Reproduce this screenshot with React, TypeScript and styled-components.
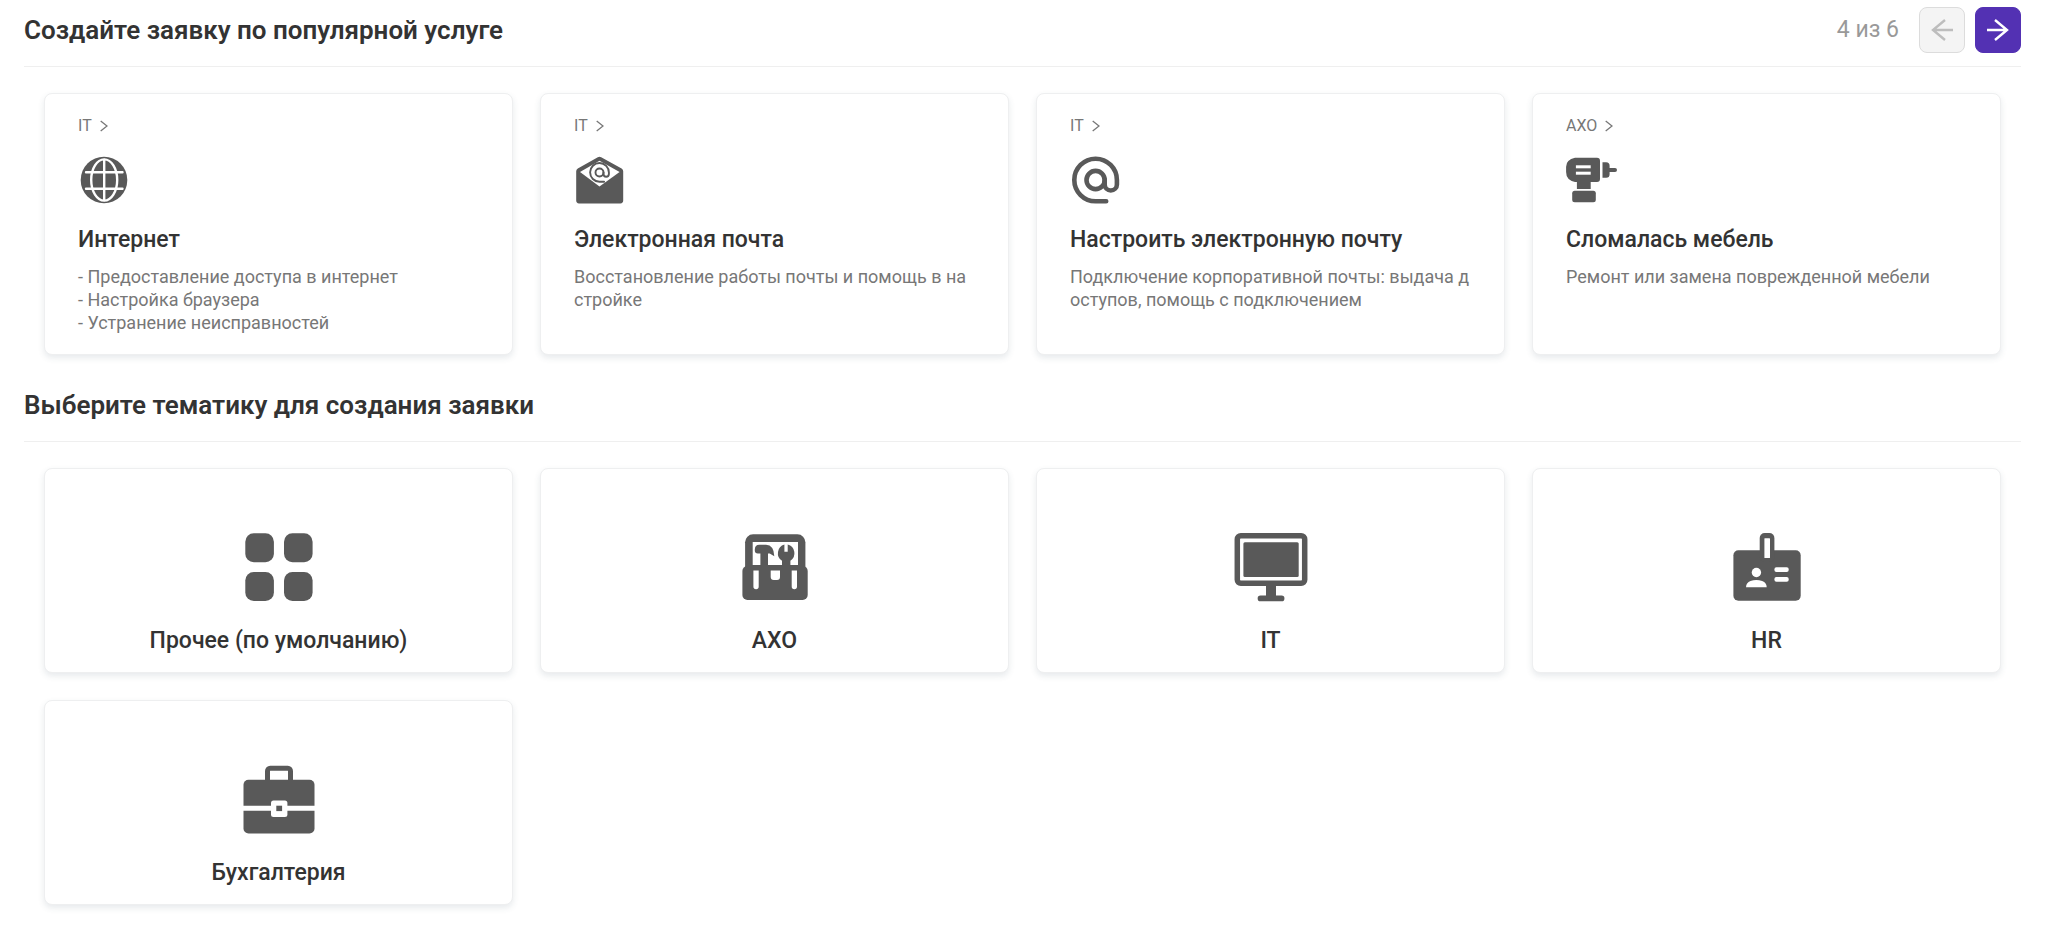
import React from "react";
import styled, { createGlobalStyle } from "styled-components";

const GlobalStyle = createGlobalStyle`
  *, *::before, *::after { box-sizing: border-box; }
  body {
    margin: 0;
    background: #fff;
    color: #333;
    font-family: Roboto, "Noto Sans", sans-serif;
  }
`;

const Page = styled.main`
  padding: 7px 27px 20px 24px;
`;

const Section = styled.section`
  & + & { margin-top: 27px; }
`;

const SectionHeader = styled.header`
  display: flex;
  align-items: center;
  justify-content: space-between;
  height: 60px;
  padding-bottom: 13px;
  border-bottom: 1px solid #efefef;
`;

const SectionTitle = styled.h2`
  margin: 0;
  font-size: 26px;
  line-height: 32px;
  font-weight: 600;
`;

const Pager = styled.nav`
  display: flex;
  align-items: center;
  gap: 10px;
`;

const PageCount = styled.span`
  margin-right: 10px;
  font-size: 23px;
  line-height: 32px;
  color: #999;
`;

const PagerButton = styled.button<{ $primary?: boolean }>`
  display: flex;
  align-items: center;
  justify-content: center;
  width: 46px;
  height: 46px;
  padding: 0;
  border-radius: 8px;
  border: 1px solid ${(p) => (p.$primary ? "#5331b3" : "#dcdcdc")};
  background: ${(p) => (p.$primary ? "#5331b3" : "#f4f4f4")};
  color: ${(p) => (p.$primary ? "#fff" : "#bdbdbd")};
`;

const CardGrid = styled.div`
  display: grid;
  grid-template-columns: repeat(4, minmax(0, 1fr));
  gap: 27px;
  padding: 26px 20px 0;
`;

const Card = styled.a`
  display: flex;
  flex-direction: column;
  border: 1px solid #eeeff0;
  border-radius: 8px;
  background: #fff;
  box-shadow: 0 3px 6px rgba(60, 80, 100, 0.12);
  color: #333;
  text-decoration: none;
`;

const ServiceCard = styled(Card)`
  min-height: 262px;
  padding: 20px 33px 18px;
`;

const TopicCard = styled(Card)`
  align-items: center;
  gap: 23px;
  min-height: 205px;
  padding: 62px 33px 16px;
`;

const Crumb = styled.span`
  display: flex;
  align-items: center;
  gap: 8px;
  font-size: 16px;
  line-height: 24px;
  color: #777;
`;

const CardTitle = styled.h3`
  margin: 0;
  font-size: 23px;
  line-height: 30px;
  font-weight: 500;
`;

const ServiceTitle = styled(CardTitle)`
  margin-top: 19px;
`;

const Description = styled.p`
  margin: 10px 0 0;
  font-size: 18px;
  line-height: 23px;
  color: #777;
  word-break: break-all;
  white-space: pre-line;
`;

const ServiceIcon = styled.svg`
  display: block;
  width: 52px;
  height: 52px;
  margin-top: 16px;
  overflow: visible;
  color: #595959;
`;

const TopicIcon = styled.svg`
  display: block;
  width: 72px;
  height: 72px;
  overflow: visible;
  color: #595959;
`;

const Chevron = () => (
  <svg width="8" height="12" viewBox="0 0 8 12" fill="none" stroke="currentColor" strokeWidth="1.3" aria-hidden="true">
    <path d="M.7 1 7 6 .7 11" />
  </svg>
);

const Arrow = ({ back }: { back?: boolean }) => (
  <svg width="24" height="24" viewBox="0 0 24 24" fill="none" stroke="currentColor" strokeWidth="2.4" aria-hidden="true">
    <path d={back ? "M23 12H3M15 2 3 12l12 10" : "M1 12h20M9 2l12 10L9 22"} />
  </svg>
);

const Globe = () => (
  <ServiceIcon viewBox="0 0 52 52" aria-hidden="true">
    <circle cx="26" cy="26" r="23.3" fill="currentColor" />
    <g fill="none" stroke="#fff" strokeWidth="2.4" strokeLinecap="round">
      <path d="M8 18.3h36.5M8 34.7h36.5M26.2 6v40" />
      <ellipse cx="26.2" cy="26" rx="13" ry="20.6" />
    </g>
  </ServiceIcon>
);

const Envelope = () => (
  <ServiceIcon viewBox="0 0 52 52" aria-hidden="true">
    <path
      fill="currentColor"
      d="M23.8 3.2a3.5 3.5 0 0 1 3.4 0L47.6 14.4q1.6 1 1.6 2.8V46.6a2.8 2.8 0 0 1-2.8 2.8H5a2.8 2.8 0 0 1-2.8-2.8V17.2q0-1.8 1.6-2.8z"
    />
    <path fill="#fff" d="M25.5 6.8 45.6 18 25.5 32.6 6 18z" />
    <g fill="none" stroke="currentColor" strokeWidth="1.9" strokeLinecap="round">
      <circle cx="25.5" cy="18.5" r="4" />
      <path d="M29.5 18.5v1.6a2.7 2.7 0 0 0 5.4 0v-1.6a9.4 9.4 0 1 0-9.4 9.3h4.6" />
    </g>
  </ServiceIcon>
);

const AtSign = () => (
  <ServiceIcon viewBox="0 0 52 52" aria-hidden="true">
    <g fill="none" stroke="currentColor" strokeWidth="4.6" strokeLinecap="round">
      <circle cx="25.6" cy="26" r="9.1" />
      <path d="M34.7 26v4.4a6 6 0 0 0 12.2 0V26A21.3 21.3 0 1 0 25.6 47.3h10.6" />
    </g>
  </ServiceIcon>
);

const Drill = () => (
  <ServiceIcon viewBox="0 0 52 52" fill="currentColor" aria-hidden="true">
    <path d="M9 3.7h22a3 3 0 0 1 3 3V25a3 3 0 0 1-3 3h-6.3v7H10.9v-7H9Q.1 26 .1 18v-5.3Q.1 5.500 9 3.700z" />
    <rect x="6.200" y="36.700" width="23.600" height="11.500" rx="2.500" />
    <path d="M36.500 8.300h3.600a3.500 3.500 0 0 1 3.500 3.500V14H49a2 2 0 0 1 0 4h-5.400v2.200a3.500 3.500 0 0 1-3.500 3.500h-3.600z" />
    <g fill="#fff">
      <rect x="9.900" y="11.300" width="14.800" height="3" />
      <rect x="9.900" y="17.700" width="14.800" height="3" />
    </g>
  </ServiceIcon>
);

const Squares = () => (
  <TopicIcon viewBox="0 0 72 72" fill="currentColor" aria-hidden="true">
    <rect x="2.300" y="2.300" width="28.600" height="29" rx="8.500" />
    <rect x="41" y="2.300" width="28.600" height="29" rx="8.500" />
    <rect x="2.300" y="41" width="28.600" height="29" rx="8.500" />
    <rect x="41" y="41" width="28.600" height="29" rx="8.500" />
  </TopicIcon>
);

const Toolbox = () => (
  <TopicIcon viewBox="0 0 72 72" fill="currentColor" aria-hidden="true">
    <rect x="6.100" y="3.300" width="60.300" height="50" rx="8" />
    <rect x="3.400" y="35" width="65.300" height="34" rx="5" />
    <g fill="#fff">
      <rect x="13.700" y="11" width="45.300" height="23" />
      <path d="M14.400 39.500h5.300v16a2.600 2.600 0 0 1-5.300 0zM52.700 39.500H58v16a2.600 2.600 0 0 1-5.300 0zM31.700 39.500H41V46a3 3 0 0 1-3 3h-3.300a3 3 0 0 1-3-3z" />
    </g>
    <path d="M21.400 36V22.600h-2.600a3 3 0 0 1-3-3v-1q0-4.900 4.500-4.900H27q8 .4 8.300 11.600l-4.600-2.700H29V36z" />
    <path d="M45.400 13.600v7.100h3.300v-7.100a9 9 0 0 1 2.700 16.200V36H43v-6.200a9 9 0 0 1 2.400-16.200z" />
  </TopicIcon>
);

const Monitor = () => (
  <TopicIcon viewBox="0 0 72 72" fill="currentColor" aria-hidden="true">
    <rect x="2.300" y="4.700" width="67.400" height="47.600" rx="3.500" fill="none" stroke="currentColor" strokeWidth="5.500" />
    <rect x="8.400" y="11.300" width="55.300" height="34.700" rx="1.500" />
    <path d="M31 54h10v10.600h5.600a2.800 2.800 0 0 1 0 5.700H25.500a2.800 2.800 0 0 1 0-5.700H31z" />
  </TopicIcon>
);

const Badge = () => (
  <TopicIcon viewBox="0 0 72 72" fill="currentColor" aria-hidden="true">
    <rect x="2.400" y="19.300" width="67.300" height="50.400" rx="5" />
    <rect x="28.700" y="2" width="14.700" height="29" rx="5" />
    <g fill="#fff">
      <rect x="33.400" y="7.300" width="5.600" height="19.700" rx=".5" />
      <circle cx="25.400" cy="41.500" r="4.700" />
      <path d="M15 56.300q0-4.600 4.500-6.300 5.800-2 11.700 0 4.500 1.700 4.500 6.300z" />
      <rect x="43.400" y="36.300" width="14.300" height="4.700" rx="2" />
      <rect x="43.400" y="46" width="14.300" height="4.700" rx="2" />
    </g>
  </TopicIcon>
);

const Briefcase = () => (
  <TopicIcon viewBox="0 0 72 72" fill="currentColor" aria-hidden="true">
    <rect x=".5" y="16.800" width="71" height="53.700" rx="5" />
    <path d="M24.500 19V8a2.700 2.700 0 0 1 2.700-2.700h17.600A2.700 2.700 0 0 1 47.500 8v11" fill="none" stroke="currentColor" strokeWidth="5" />
    <path fill="#fff" d="M0 42.800h72v5H0z" />
    <rect x="28" y="37.500" width="16.400" height="16.400" rx="2.500" fill="#fff" />
    <rect x="33.300" y="42.700" width="5.800" height="5.400" />
  </TopicIcon>
);

const services = [
  {
    category: "IT",
    title: "Интернет",
    text: "- Предоставление доступа в интернет\n- Настройка браузера\n- Устранение неисправностей",
    Icon: Globe,
  },
  { category: "IT", title: "Электронная почта", text: "Восстановление работы почты и помощь в настройке", Icon: Envelope },
  {
    category: "IT",
    title: "Настроить электронную почту",
    text: "Подключение корпоративной почты: выдача доступов, помощь с подключением",
    Icon: AtSign,
  },
  { category: "АХО", title: "Сломалась мебель", text: "Ремонт или замена поврежденной мебели", Icon: Drill },
];

const topics = [
  { title: "Прочее (по умолчанию)", Icon: Squares },
  { title: "АХО", Icon: Toolbox },
  { title: "IT", Icon: Monitor },
  { title: "HR", Icon: Badge },
  { title: "Бухгалтерия", Icon: Briefcase },
];

export default function App() {
  return (
    <>
      <GlobalStyle />
      <Page>
        <Section>
          <SectionHeader>
            <SectionTitle>Создайте заявку по популярной услуге</SectionTitle>
            <Pager>
              <PageCount>4 из 6</PageCount>
              <PagerButton type="button" disabled aria-label="Назад">
                <Arrow back />
              </PagerButton>
              <PagerButton type="button" $primary aria-label="Вперёд">
                <Arrow />
              </PagerButton>
            </Pager>
          </SectionHeader>
          <CardGrid>
            {services.map(({ category, title, text, Icon }) => (
              <ServiceCard href="#" key={title}>
                <Crumb>
                  {category}
                  <Chevron />
                </Crumb>
                <Icon />
                <ServiceTitle>{title}</ServiceTitle>
                <Description>{text}</Description>
              </ServiceCard>
            ))}
          </CardGrid>
        </Section>
        <Section>
          <SectionHeader>
            <SectionTitle>Выберите тематику для создания заявки</SectionTitle>
          </SectionHeader>
          <CardGrid>
            {topics.map(({ title, Icon }) => (
              <TopicCard href="#" key={title}>
                <Icon />
                <CardTitle>{title}</CardTitle>
              </TopicCard>
            ))}
          </CardGrid>
        </Section>
      </Page>
    </>
  );
}
